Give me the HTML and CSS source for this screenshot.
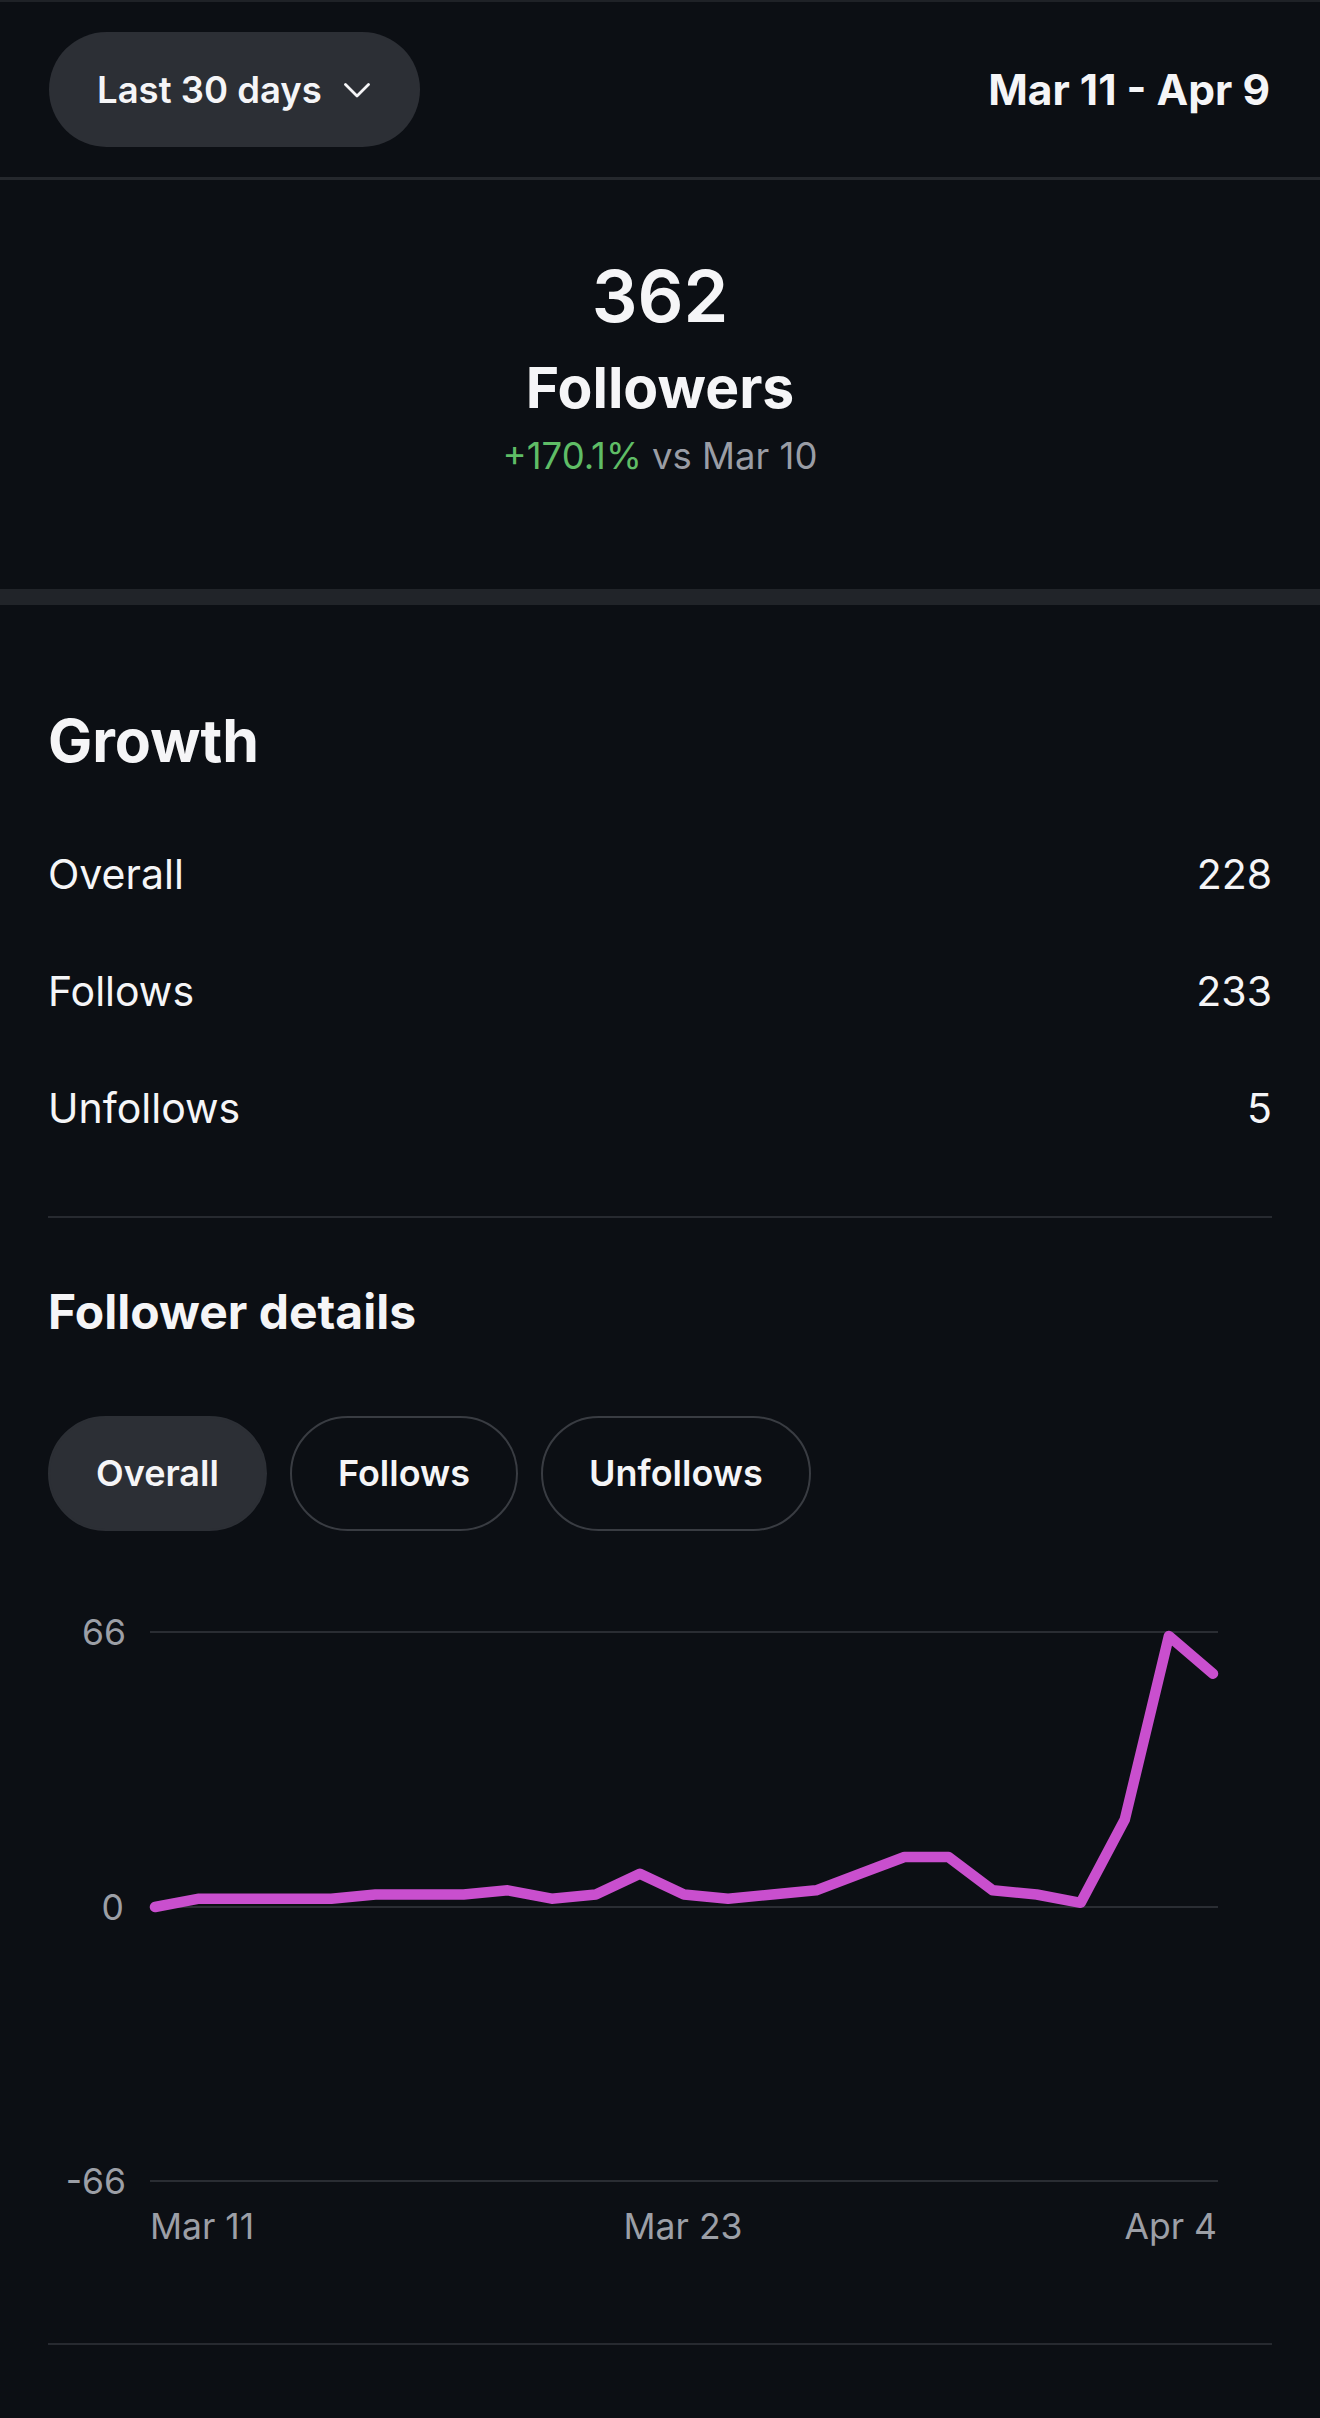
FILE: index.html
```html
<!DOCTYPE html>
<html lang="en">
  <head>
    <meta charset="UTF-8" />
    <meta name="viewport" content="width=device-width, initial-scale=1.0" />
    <title>Followers Insights</title>
    <link rel="stylesheet" href="styles.css">
  </head>
  <body>
    <!-- Range Header -->
    <div class="header">
      <button class="range-pill" type="button">
        <span>Last 30 days</span>
        <svg class="chevron" width="26" height="15" viewBox="0 0 26 15">
          <path d="M1.5 1.5 L13 13 L24.5 1.5" fill="none" stroke="#f5f5f7" stroke-width="2.8" stroke-linecap="round" stroke-linejoin="round" />
        </svg>
      </button>
      <div class="range-dates">Mar 11 - Apr 9</div>
    </div>

    <!-- Summary -->
    <div class="summary">
      <div class="summary-count">362</div>
      <div class="summary-label">Followers</div>
      <div class="summary-change">
        <span class="change-up">+170.1%</span> vs Mar 10
      </div>
    </div>

    <div class="band"></div>

    <!-- Growth -->
    <div class="section">
      <h2 class="section-title">Growth</h2>
      <div class="stat-list">
        <div class="stat-row"><span>Overall</span><span>228</span></div>
        <div class="stat-row"><span>Follows</span><span>233</span></div>
        <div class="stat-row"><span>Unfollows</span><span>5</span></div>
      </div>

      <div class="divider"></div>

      <h3 class="details-title">Follower details</h3>
      <div class="tabs">
        <button class="tab active" type="button">Overall</button>
        <button class="tab" type="button">Follows</button>
        <button class="tab" type="button">Unfollows</button>
      </div>

      <!-- Chart -->
      <svg class="chart" width="1224" height="758" viewBox="0 0 1224 758">
        <line class="grid" x1="102" y1="101" x2="1170" y2="101" />
        <line class="grid" x1="102" y1="376" x2="1170" y2="376" />
        <line class="grid" x1="102" y1="650" x2="1170" y2="650" />

        <text class="axis" x="78" y="114" text-anchor="end">66</text>
        <text class="axis" x="76" y="389" text-anchor="end">0</text>
        <text class="axis" x="78" y="663" text-anchor="end">-66</text>

        <text class="axis" x="102" y="708" text-anchor="start">Mar 11</text>
        <text class="axis" x="635" y="708" text-anchor="middle">Mar 23</text>
        <text class="axis" x="1169" y="708" text-anchor="end">Apr 4</text>

        <polyline class="series"
          points="107,376 151.1,367.7 195.2,367.7 239.2,367.7 283.3,367.7 327.4,363.5 371.5,363.5 415.6,363.5 459.7,359.3 503.7,367.7 547.8,363.5 591.9,342.7 636,363.5 680.1,367.7 724.2,363.5 768.2,359.3 812.3,342.7 856.4,326 900.5,326 944.6,359.3 988.7,363.5 1032.7,371.8 1076.8,288.5 1120.9,105.1 1165,142.7" />
      </svg>

      <div class="divider bottom"></div>
    </div>
  </body>
</html>
```

FILE: styles.css
```css
/* Global Reset */
* {
  margin: 0;
  padding: 0;
  box-sizing: border-box;
}

body {
  font-family: "Inter", "Noto Sans", sans-serif;
  background-color: #0c0f14;
  color: #f5f5f7;
  width: 1320px;
  min-height: 2418px;
}

/* Header */
.header {
  display: flex;
  align-items: center;
  justify-content: space-between;
  padding: 30px 50px 30px 49px;
  border-top: 2px solid #1f2227;
  border-bottom: 3px solid #25282d;
}

.range-pill {
  display: flex;
  align-items: center;
  gap: 22px;
  height: 115px;
  padding: 0 50px 0 48px;
  background-color: #2c2f35;
  color: #f5f5f7;
  border: none;
  border-radius: 58px;
  font-family: inherit;
  font-size: 36.5px;
  font-weight: 600;
}

.chevron {
  margin-top: 2px;
}

.range-dates {
  font-size: 42.5px;
  font-weight: 700;
}

/* Summary */
.summary {
  padding: 80px 0 114px;
  text-align: center;
}

.summary-count {
  font-size: 72px;
  font-weight: 600;
  line-height: 1;
}

.summary-label {
  margin-top: 27px;
  font-size: 57px;
  font-weight: 700;
  line-height: 1;
}

.summary-change {
  margin-top: 22px;
  font-size: 36.5px;
  line-height: 1;
  color: #9a9da5;
}

.change-up {
  color: #5fbd66;
}

.band {
  height: 16px;
  background-color: #212429;
}

/* Growth Section */
.section {
  padding: 106px 48px 0;
}

.section-title {
  font-size: 59px;
  font-weight: 700;
  line-height: 1;
}

.stat-list {
  margin-top: 46px;
}

.stat-row {
  display: flex;
  justify-content: space-between;
  height: 117px;
  line-height: 117px;
  font-size: 41px;
}

.divider {
  margin-top: 49px;
  height: 2px;
  background-color: #272a30;
}

.divider.bottom {
  margin-top: 54px;
}

.details-title {
  margin-top: 70px;
  font-size: 48px;
  font-weight: 700;
  line-height: 1;
}

/* Tabs */
.tabs {
  display: flex;
  gap: 23px;
  margin-top: 80px;
}

.tab {
  height: 115px;
  padding: 0 46px;
  background-color: transparent;
  color: #f5f5f7;
  border: 2px solid #393c42;
  border-radius: 58px;
  font-family: inherit;
  font-size: 36px;
  font-weight: 600;
}

.tab.active {
  background-color: #2c2f35;
  border-color: #2c2f35;
}

/* Chart */
.chart {
  display: block;
}

.chart .grid {
  stroke: #2a2d33;
  stroke-width: 2;
}

.chart .axis {
  font-family: "Inter", "Noto Sans", sans-serif;
  font-size: 35.5px;
  fill: #9c9fa6;
}

.chart .series {
  fill: none;
  stroke: #c94fce;
  stroke-width: 10.5;
  stroke-linecap: round;
  stroke-linejoin: round;
}
```
